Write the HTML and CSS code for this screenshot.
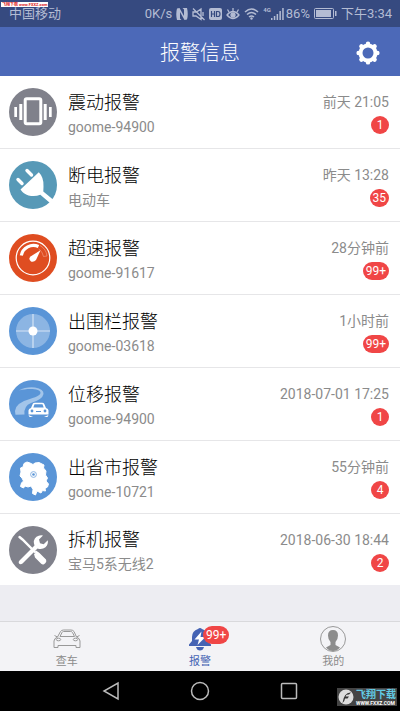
FILE: index.html
```html
<!DOCTYPE html>
<html lang="zh-CN">
<head>
<meta charset="utf-8">
<meta name="viewport" content="width=device-width, initial-scale=1">
<title>报警信息</title>
<link rel="stylesheet" href="styles.css">
</head>
<body>
<div class="status">
  <span class="carrier">中国移动</span>
  <span class="ribbon">飞翔下载 www.FXXZ.com</span>
  <span class="rate">0K/s</span>
  <svg width="12" height="14" viewBox="0 0 12 14"><path d="M1 1.500L3.500 1L8 9V2.500L6.500 1H11Q12.500 7 11 12.500L8.500 13L4 5V11.500L5.500 13H1Q-.5 7 1 1.500Z" fill="currentColor"/></svg>
  <svg width="13" height="14" viewBox="0 0 13 14" fill="none" stroke="currentColor" stroke-width="1.300"><path d="M1 5V9H4L9 12.500V2L4.500 5ZM1 1.500L12.500 13M11 5V9"/></svg>
  <svg width="13" height="12" viewBox="0 0 13 12"><rect width="13" height="12" rx="2" fill="currentColor"/><path d="M2.500 3V9M5.500 3V9M2.500 6H5.500M7.500 3.500V8.500H9Q11 8.500 11 6T9 3.500Z" fill="none" stroke="#364a80" stroke-width="1.200"/></svg>
  <svg width="14" height="12" viewBox="0 0 14 12" fill="none" stroke="currentColor" stroke-width="1.300"><path d="M1 7Q7 0 13 7Q7 14 1 7ZM7 3V0M3 4L1.500 1.500M11 4L12.500 1.500"/><circle cx="7" cy="7" r="2" fill="currentColor"/></svg>
  <svg width="15" height="12" viewBox="0 0 15 12" fill="none" stroke="currentColor" stroke-width="1.500"><path d="M1 4Q7.500 -2 14 4M3 6.500Q7.500 2.500 12 6.500M5 9Q7.500 7 10 9"/><circle cx="7.500" cy="10.500" r="1.200" fill="currentColor" stroke="none"/></svg>
  <span class="net">4G</span>
  <svg class="signal" width="13" height="12" viewBox="0 0 13 12" fill="currentColor"><path d="M0 10H1.500V12H0ZM2.800 8H4.300V12H2.800ZM5.600 6H7.100V12H5.600ZM8.400 3H9.900V12H8.400ZM11.200 0H12.700V12H11.200Z"/></svg>
  <span class="percent">86%</span>
  <svg width="23" height="11" viewBox="0 0 23 11"><rect x=".5" y=".5" width="19" height="10" rx="1" fill="none" stroke="currentColor"/><path d="M2 2H17V9H2ZM21 3H22.500V8H21Z" fill="currentColor"/></svg>
  <span class="clock">下午3:34</span>
</div>

<header class="header">
  <h1>报警信息</h1>
  <button class="settings" type="button" aria-label="设置">
    <svg width="24" height="24" viewBox="-12 -12 24 24">
      <circle r="7.500" fill="none" stroke="#fff" stroke-width="4"/>
      <g fill="none" stroke="#fff" stroke-width="4.400" stroke-linecap="round"><path d="M0-9.400V-9M0 9V9.400M-9.400 0H-9M9 0H9.400M-6.600-6.600L-6.300-6.300M6.300 6.300L6.600 6.600M-6.600 6.600L-6.300 6.300M6.300-6.300L6.600-6.600"/></g>
    </svg>
  </button>
</header>

<main>
<ul class="alarms">
  <li class="alarm">
    <svg class="icon" viewBox="0 0 48 48"><circle cx="24" cy="24" r="24" fill="#80818b"/><rect x="16.200" y="10.800" width="15.600" height="25" rx="1.500" fill="none" stroke="#fff" stroke-width="3"/><path d="M10.300 16H13.300V32H10.300ZM34.700 16H37.700V32H34.700ZM5.300 19H8V29H5.300ZM40 19H42.700V29H40Z" fill="#fff"/></svg>
    <div class="info"><h2>震动报警</h2><p>goome-94900</p></div>
    <div class="meta"><time>前天 21:05</time><span class="badge">1</span></div>
  </li>
  <li class="alarm">
    <svg class="icon" viewBox="0 0 48 48"><circle cx="24" cy="24" r="24" fill="#5799b7"/><path d="M9 18.500L13 22.500M18 9.500L22.500 14" stroke="#fff" stroke-width="3.400" stroke-linecap="round"/><path d="M11.500 28.500L29.800 11.300Q35 16.500 34.500 25.500L34.300 30.500L44 38.500L41 42L31.300 33.800Q26 36 19.500 34.500Q14.500 33 11.500 28.500Z" fill="#fff"/></svg>
    <div class="info"><h2>断电报警</h2><p>电动车</p></div>
    <div class="meta"><time>昨天 13:28</time><span class="badge">35</span></div>
  </li>
  <li class="alarm">
    <svg class="icon" viewBox="0 0 48 48"><circle cx="24" cy="24" r="24" fill="#df4d21"/><circle cx="24" cy="24" r="16.800" fill="none" stroke="#fff" stroke-width="1.200"/><path d="M12.300 21.500A12.300 12.300 0 0 1 29.500 12.500" fill="none" stroke="#fff" stroke-width="3.200"/><path d="M31 11.500A14 14 0 0 1 38 22L34.500 22.500A11 11 0 0 0 29.700 15" fill="none" stroke="#f2a48e" stroke-width=".6"/><path d="M31.500 16.300L27 26Q25 28.300 22 27.500Q19 25 21.500 22.500Z" fill="#fff"/></svg>
    <div class="info"><h2>超速报警</h2><p>goome-91617</p></div>
    <div class="meta"><time>28分钟前</time><span class="badge">99+</span></div>
  </li>
  <li class="alarm">
    <svg class="icon" viewBox="0 0 48 48"><circle cx="24" cy="24" r="24" fill="#5a95d7"/><circle cx="24" cy="24" r="17" fill="#8cb5e3"/><path d="M24 7V41M7 24H41" stroke="#d5e4f5" stroke-width="1.200"/><circle cx="24" cy="24" r="4.500" fill="#fff"/></svg>
    <div class="info"><h2>出围栏报警</h2><p>goome-03618</p></div>
    <div class="meta"><time>1小时前</time><span class="badge">99+</span></div>
  </li>
  <li class="alarm">
    <svg class="icon" viewBox="0 0 48 48"><circle cx="24" cy="24" r="24" fill="#5a95d7"/><path d="M10 10.500Q17 6.500 26 7.500Q35 9 34.500 14Q33.500 19.500 22 23Q14.500 26 15.500 34.500L6.500 34.800Q4 26 15 21C23 18 31 16.500 31.500 13C32 8.500 19 8 10 10.500Z" fill="#a3c5ea"/><path d="M22 28L23.700 24Q24.200 22.700 26 22.700H33Q34.800 22.700 35.300 24L37 28Q39.500 28.500 39.500 30.500V34.500H19.500V30.500Q19.500 28.500 22 28Z" fill="#fff"/><path d="M24.300 27.500L25.500 24.300H33.500L34.700 27.500Z" fill="#5a95d7"/><circle cx="23" cy="31" r="1.400" fill="#5a95d7"/><circle cx="36" cy="31" r="1.400" fill="#5a95d7"/><path d="M27 31.500H32" stroke="#5a95d7"/><path d="M19.500 35L24 37H20.500ZM39.500 35L35 37H38.500Z" fill="#fff"/></svg>
    <div class="info"><h2>位移报警</h2><p>goome-94900</p></div>
    <div class="meta"><time>2018-07-01 17:25</time><span class="badge">1</span></div>
  </li>
  <li class="alarm">
    <svg class="icon" viewBox="0 0 48 48"><circle cx="24" cy="24" r="24" fill="#5a95d7"/><path d="M15 10.500L18 9L21 10L24 11.500L26 10L30 9.500L33 11L35 12L34.500 15L37 18L36.500 22L38.500 25L37 28L39.500 31L38.500 34L36 35.500L36.500 38L33.500 37.500L32 40L28 38L26.500 42L23.500 40.500L24 36.500L22 33L19 34L16 33L14.500 35L11.500 33.500L12.500 30L14.500 28L13 25L11 23L12 19L11.500 15L14 14Z" fill="#fff" stroke="#fff" stroke-linejoin="round"/><circle cx="24.500" cy="21.500" r="2.900" fill="none" stroke="#8cb5e3"/><circle cx="24.500" cy="21.500" r="1.300" fill="#5a95d7"/></svg>
    <div class="info"><h2>出省市报警</h2><p>goome-10721</p></div>
    <div class="meta"><time>55分钟前</time><span class="badge">4</span></div>
  </li>
  <li class="alarm">
    <svg class="icon" viewBox="0 0 48 48"><circle cx="24" cy="24" r="24" fill="#80818b"/><path d="M10.500 11L13.500 13.500L26 26" fill="none" stroke="#fff" stroke-width="2.400" stroke-linecap="round"/><path d="M27 24.500L30.500 27L37 33.500Q38 35 36.500 37L35 38.300Q33.500 39 32.200 37.800L26 31.500L25 28L26.500 27Z" fill="#fff"/><path d="M10.500 34.500L25.500 19.500Q23.500 14 27.500 10.800Q30.500 8.700 34 9.500L30 13.500L31 17.300L34.700 18.300L38.800 14.300Q39.500 18.300 36.500 21.300Q33 24 28.500 22.500L13.500 37.500Q11.500 38.800 10 37.500Q9 36 10.500 34.500Z" fill="#fff"/></svg>
    <div class="info"><h2>拆机报警</h2><p>宝马5系无线2</p></div>
    <div class="meta"><time>2018-06-30 18:44</time><span class="badge">2</span></div>
  </li>
</ul>
</main>

<nav class="tabs">
  <a class="tab" href="#cars">
    <svg width="28" height="22" viewBox="0 0 28 22" fill="none" stroke="#999" stroke-width="1"><path d="M4.500 9L7.500 3.500Q8.500 2 10.500 2H18Q20 2 21 3.500L23.500 9L26.500 7.500M4.500 9L1.500 7.500M4.500 9Q1 10.500 1 13V19.500H5V17.500H23V19.500H27V13Q27 10.500 23.500 9M7 8.500L9 4.500Q9.500 3.500 10.500 3.500H17.500Q19 3.500 19.500 4.500L21.500 8.500Z"/><ellipse cx="5.500" cy="11.500" rx="2.200" ry="1.300"/><ellipse cx="22.500" cy="11.500" rx="2.200" ry="1.300"/></svg>
    <span>查车</span>
  </a>
  <a class="tab active" href="#alarms" aria-current="page">
    <span class="bell">
      <svg width="22" height="24" viewBox="0 0 22 24"><path d="M9 2Q11 0 13 2Q19 4 19 10V14L22 17.500V19H0V17.500L3 14V10Q3 4 9 2ZM7 20H15Q14 23.500 11 23.500T7 20Z" fill="#4563b4"/><path d="M12.500 4.500L5.500 12.500H10L8.500 18L16.500 10H11.500Z" fill="#fff"/></svg>
      <span class="badge">99+</span>
    </span>
    <span>报警</span>
  </a>
  <a class="tab" href="#me">
    <svg width="26" height="26" viewBox="0 0 26 26"><circle cx="13" cy="13" r="12.500" fill="none" stroke="#999"/><path d="M13 4Q18 4 18 9.500Q18 13.500 15.500 16V19L20 21.500Q17 25 13 25T6 21.500L10.500 19V16Q8 13.500 8 9.500Q8 4 13 4Z" fill="#8c8c8c"/></svg>
    <span>我的</span>
  </a>
</nav>

<div class="system">
  <button type="button" aria-label="返回"><svg width="18" height="20" viewBox="0 0 18 20"><path d="M16 2V18L2 10Z"/></svg></button>
  <button type="button" aria-label="主页"><svg width="20" height="20" viewBox="0 0 20 20"><circle cx="10" cy="10" r="8.500"/></svg></button>
  <button type="button" aria-label="最近任务"><svg width="18" height="18" viewBox="0 0 18 18"><rect x="1.500" y="1.500" width="15" height="15" rx="1"/></svg></button>
  <div class="mark">
    <svg width="16" height="16" viewBox="0 0 16 16"><circle cx="8" cy="8" r="7.500" fill="#ddd"/><path d="M4.500 14Q6 3 13 3.500L11 5.500Q8 5 7.500 7.500H11L9.500 9.500H7Q6.500 13 4.500 14Z" fill="#333"/></svg>
    <div><b>飞翔下载</b><small>WWW.FXXZ.COM</small></div>
  </div>
</div>
</body>
</html>
```
FILE: styles.css
```css
* { box-sizing: border-box; }
body {
  margin: 0;
  min-height: 100vh;
  display: flex;
  flex-direction: column;
  background: #ededf2;
  font-family: Roboto, "Noto Sans CJK SC", sans-serif;
  font-weight: 400;
}
h1, h2, p, ul { margin: 0; padding: 0; font-weight: 400; }
button { border: 0; padding: 0; background: none; }
svg { display: block; flex: none; }

.status {
  position: relative;
  display: flex;
  align-items: center;
  gap: 4px;
  height: 27px;
  padding: 0 8px 0 9px;
  background: #364a80;
  color: #b4bcd3;
  font-size: 13px;
  line-height: 20px;
  white-space: nowrap;
}
.carrier { margin-right: auto; }
.ribbon {
  position: absolute;
  top: 2px;
  left: 1px;
  padding: 0 1px;
  background: #fff;
  color: #d22;
  font-size: 4px;
  font-weight: 700;
  line-height: 5px;
}
.net { align-self: flex-start; font-size: 6px; font-weight: 700; line-height: 20px; }
.signal { margin-left: -4px; }
.percent { margin-left: -2px; }

.header {
  display: grid;
  grid-template-columns: 1fr auto 1fr;
  align-items: center;
  height: 49px;
  padding: 2px 20px 0;
  background: #4c69b8;
  color: #fff;
}
.header h1 { grid-column: 2; font-size: 20px; font-weight: 300; line-height: 28px; }
.settings { justify-self: end; }

main { flex: 1; }
.alarms { list-style: none; background: #fff; }
.alarm {
  display: flex;
  align-items: center;
  height: 73px;
  padding: 0 11px 0 9px;
  border-bottom: 1px solid #e6e6e8;
}
.alarm:last-child { height: 71px; border-bottom: 0; }
.icon { width: 48px; height: 48px; }
.info { flex: 1; margin-left: 11px; padding-top: 3px; }
.info h2 { color: #000; font-size: 18px; font-weight: 300; line-height: 26px; }
.info p { color: #8b8b8b; font-size: 14px; line-height: 22px; }
.meta {
  display: flex;
  flex-direction: column;
  align-items: flex-end;
  gap: 2px;
  color: #8b8b8b;
  font-size: 14px;
  line-height: 24px;
}
.badge {
  min-width: 18px;
  height: 18px;
  padding: 0 3px;
  border-radius: 9px;
  background: #f04646;
  color: #fff;
  font-size: 12px;
  line-height: 18px;
  text-align: center;
}

.tabs {
  display: grid;
  grid-template-columns: repeat(3, 1fr);
  height: 50px;
  background: #f3f3f6;
  border-top: 1px solid #d9d9dc;
}
.tab {
  display: grid;
  grid-template-rows: 32px 14px;
  place-items: center;
  align-content: start;
  padding-top: 1px;
  color: #8b8b8b;
  font-size: 11px;
  line-height: 14px;
  text-decoration: none;
}
.tab.active { color: #4563b4; }
.bell { position: relative; }
.bell .badge { position: absolute; top: -1px; left: 14px; }

.system {
  position: relative;
  display: flex;
  align-items: center;
  justify-content: center;
  gap: 70px;
  height: 40px;
  background: #000;
}
.system button svg { fill: none; stroke: #bbb; stroke-width: 1.5; }
.mark {
  position: absolute;
  right: 3px;
  bottom: 5px;
  display: flex;
  align-items: center;
  gap: 2px;
  height: 18px;
  padding: 0 1px;
  background: #444;
}
.mark b, .mark small { display: block; white-space: nowrap; }
.mark b { color: #62cce6; font-size: 10px; line-height: 12px; }
.mark small { color: #fff; font-size: 5px; font-weight: 700; line-height: 5px; }
```
